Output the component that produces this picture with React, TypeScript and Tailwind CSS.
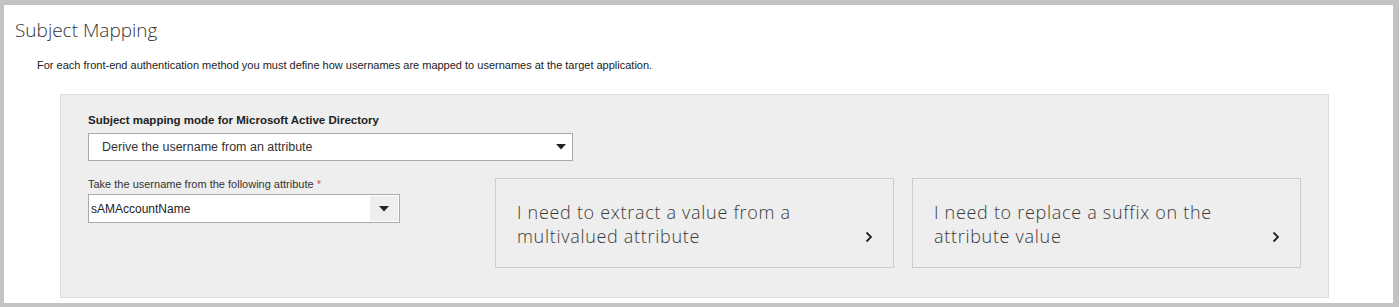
import { FC } from 'react';

const Caret: FC = () => (
  <svg width="10" height="6" viewBox="0 0 10 6" className="block">
    <path d="M0 0h10L5 5.5z" fill="#222" />
  </svg>
);

const Chevron: FC = () => (
  <svg width="8" height="12" viewBox="0 0 8 12" className="block">
    <path d="M1.5 1.5 6 6l-4.5 4.5" fill="none" stroke="#222" strokeWidth="1.8" />
  </svg>
);

const OptionCard: FC<{ lines: string[]; width: string }> = ({ lines, width }) => (
  <button
    className={`${width} h-[90px] shrink-0 border border-[#cdcdcd] bg-[#eeeeee] pl-[21px] pr-[20px] flex items-center justify-between text-left cursor-pointer`}>
    <span className="font-['Open_Sans',sans-serif] font-light text-[18px] tracking-[0.7px] leading-[24px] text-[#3a3a3a] pt-[2px]">
      {lines.map((line) => (
        <span key={line} className="block">
          {line}
        </span>
      ))}
    </span>
    <span className="self-end mb-[24px]">
      <Chevron />
    </span>
  </button>
);

export default function App() {
  return (
    <div className="w-[1399px] h-[307px] bg-[#c3c3c3] pt-[5px] pl-[4px] pr-[6px] pb-[4px] overflow-hidden font-['Liberation_Sans',sans-serif]">
      <div className="h-full bg-white pl-[11px] pt-[12px]">
        <h1 className="font-['Open_Sans',sans-serif] font-light text-[19px] leading-[26px] text-[#333]">Subject Mapping</h1>
        <p className="mt-[15px] ml-[22px] text-[11px] leading-[14px] text-[#222]">
          For each front-end authentication method you must define how usernames are mapped to usernames at the target
          application.
        </p>

        {/* mapping panel */}
        <div className="mt-[22px] ml-[45px] w-[1269px] h-[204px] border border-[#dcdcdc] bg-[#eeeeee] pl-[27px] pt-[17px]">
          <label className="block text-[11.5px] font-bold leading-[16px] text-[#222]">
            Subject mapping mode for Microsoft Active Directory
          </label>
          <div className="mt-[5px] w-[485px] h-[28px] border border-[#aaaaaa] bg-white flex items-center justify-between pl-[13px] pr-[6px]">
            <span className="text-[12.5px] text-[#333]">Derive the username from an attribute</span>
            <Caret />
          </div>

          <div className="flex mt-[15px]">
            <div className="w-[407px] shrink-0 pt-[1px]">
              <label className="block text-[11px] leading-[14px] text-[#333]">
                Take the username from the following attribute <span className="text-[#d9534f]">*</span>
              </label>
              <div className="mt-[3px] w-[312px] h-[29px] border border-[#aaaaaa] bg-white flex items-stretch">
                <span className="flex-1 flex items-center pl-[2px] text-[12px] text-[#222]">sAMAccountName</span>
                <span className="w-[28px] m-[1px] bg-[#eeeeee] flex items-center justify-center">
                  <Caret />
                </span>
              </div>
            </div>
            <div className="flex gap-[18px] mt-[2px]">
              <OptionCard width="w-[399px]" lines={['I need to extract a value from a', 'multivalued attribute']} />
              <OptionCard width="w-[389px]" lines={['I need to replace a suffix on the', 'attribute value']} />
            </div>
          </div>
        </div>
      </div>
    </div>
  );
}
